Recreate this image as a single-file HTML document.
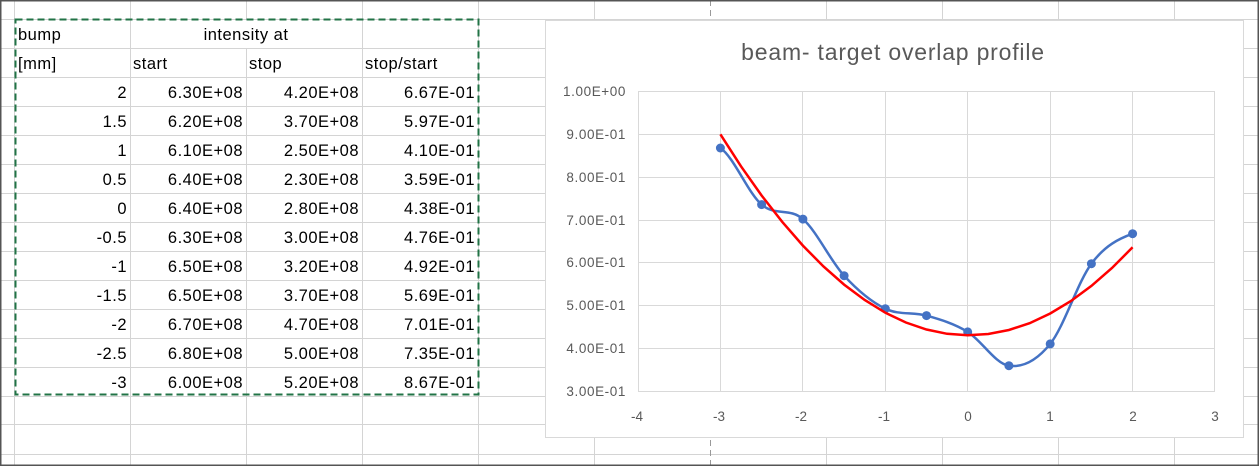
<!DOCTYPE html>
<html><head><meta charset="utf-8"><style>
html,body{margin:0;padding:0;background:#fff}
svg{display:block}
text{font-family:"Liberation Sans",sans-serif}
</style></head><body>
<svg width="1259" height="466" viewBox="0 0 1259 466" xmlns="http://www.w3.org/2000/svg">
<rect width="1259" height="466" fill="#fff"/>
<g stroke="#d4d4d4" stroke-width="1">
<line x1="14.5" y1="0" x2="14.5" y2="466"/>
<line x1="130.5" y1="0" x2="130.5" y2="466"/>
<line x1="246.5" y1="0" x2="246.5" y2="466"/>
<line x1="362.5" y1="0" x2="362.5" y2="466"/>
<line x1="478.5" y1="0" x2="478.5" y2="466"/>
<line x1="594.5" y1="0" x2="594.5" y2="466"/>
<line x1="826.5" y1="0" x2="826.5" y2="466"/>
<line x1="942.5" y1="0" x2="942.5" y2="466"/>
<line x1="1058.5" y1="0" x2="1058.5" y2="466"/>
<line x1="1174.5" y1="0" x2="1174.5" y2="466"/>
<line x1="0" y1="19.5" x2="1259" y2="19.5"/>
<line x1="0" y1="48.5" x2="1259" y2="48.5"/>
<line x1="0" y1="77.5" x2="1259" y2="77.5"/>
<line x1="0" y1="106.5" x2="1259" y2="106.5"/>
<line x1="0" y1="135.5" x2="1259" y2="135.5"/>
<line x1="0" y1="164.5" x2="1259" y2="164.5"/>
<line x1="0" y1="193.5" x2="1259" y2="193.5"/>
<line x1="0" y1="222.5" x2="1259" y2="222.5"/>
<line x1="0" y1="251.5" x2="1259" y2="251.5"/>
<line x1="0" y1="280.5" x2="1259" y2="280.5"/>
<line x1="0" y1="309.5" x2="1259" y2="309.5"/>
<line x1="0" y1="338.5" x2="1259" y2="338.5"/>
<line x1="0" y1="367.5" x2="1259" y2="367.5"/>
<line x1="0" y1="396.5" x2="1259" y2="396.5"/>
<line x1="0" y1="424.5" x2="1259" y2="424.5"/>
<line x1="0" y1="454.5" x2="1259" y2="454.5"/>
</g>
<rect x="131" y="20" width="231" height="28" fill="#fff"/>
<line x1="710.5" y1="0" x2="710.5" y2="466" stroke="#999" stroke-dasharray="6,4"/>
<rect x="15.5" y="19.5" width="463" height="375" fill="none" stroke="#217346" stroke-width="2" stroke-dasharray="7,4"/>
<g font-size="16.5" fill="#000" letter-spacing="0.5">
<text x="18" y="40">bump</text>
<text x="246" y="40" text-anchor="middle">intensity at</text>
<text x="18" y="69">[mm]</text>
<text x="133" y="69">start</text>
<text x="249" y="69">stop</text>
<text x="365" y="69">stop/start</text>
</g>
<g font-size="16.5" fill="#000" text-anchor="end" letter-spacing="0.5">
<text x="127" y="98">2</text><text x="243" y="98">6.30E+08</text><text x="359" y="98">4.20E+08</text><text x="475" y="98">6.67E-01</text>
<text x="127" y="127">1.5</text><text x="243" y="127">6.20E+08</text><text x="359" y="127">3.70E+08</text><text x="475" y="127">5.97E-01</text>
<text x="127" y="156">1</text><text x="243" y="156">6.10E+08</text><text x="359" y="156">2.50E+08</text><text x="475" y="156">4.10E-01</text>
<text x="127" y="185">0.5</text><text x="243" y="185">6.40E+08</text><text x="359" y="185">2.30E+08</text><text x="475" y="185">3.59E-01</text>
<text x="127" y="214">0</text><text x="243" y="214">6.40E+08</text><text x="359" y="214">2.80E+08</text><text x="475" y="214">4.38E-01</text>
<text x="127" y="243">-0.5</text><text x="243" y="243">6.30E+08</text><text x="359" y="243">3.00E+08</text><text x="475" y="243">4.76E-01</text>
<text x="127" y="272">-1</text><text x="243" y="272">6.50E+08</text><text x="359" y="272">3.20E+08</text><text x="475" y="272">4.92E-01</text>
<text x="127" y="301">-1.5</text><text x="243" y="301">6.50E+08</text><text x="359" y="301">3.70E+08</text><text x="475" y="301">5.69E-01</text>
<text x="127" y="330">-2</text><text x="243" y="330">6.70E+08</text><text x="359" y="330">4.70E+08</text><text x="475" y="330">7.01E-01</text>
<text x="127" y="359">-2.5</text><text x="243" y="359">6.80E+08</text><text x="359" y="359">5.00E+08</text><text x="475" y="359">7.35E-01</text>
<text x="127" y="388">-3</text><text x="243" y="388">6.00E+08</text><text x="359" y="388">5.20E+08</text><text x="475" y="388">8.67E-01</text>
</g>
<rect x="545.5" y="20.5" width="698" height="417" fill="#fff" stroke="#d9d9d9"/>
<text x="893" y="60" font-size="23" fill="#595959" text-anchor="middle" letter-spacing="0.8">beam- target overlap profile</text>
<g stroke="#d9d9d9" stroke-width="1">
<line x1="638" y1="91.5" x2="1215" y2="91.5"/>
<line x1="638" y1="134.5" x2="1215" y2="134.5"/>
<line x1="638" y1="177.5" x2="1215" y2="177.5"/>
<line x1="638" y1="220.5" x2="1215" y2="220.5"/>
<line x1="638" y1="262.5" x2="1215" y2="262.5"/>
<line x1="638" y1="305.5" x2="1215" y2="305.5"/>
<line x1="638" y1="348.5" x2="1215" y2="348.5"/>
<line x1="638" y1="391.5" x2="1215" y2="391.5"/>
<line x1="638.5" y1="91" x2="638.5" y2="391"/>
<line x1="720.5" y1="91" x2="720.5" y2="391"/>
<line x1="802.5" y1="91" x2="802.5" y2="391"/>
<line x1="885.5" y1="91" x2="885.5" y2="391"/>
<line x1="967.5" y1="91" x2="967.5" y2="391"/>
<line x1="1050.5" y1="91" x2="1050.5" y2="391"/>
<line x1="1132.5" y1="91" x2="1132.5" y2="391"/>
<line x1="1214.5" y1="91" x2="1214.5" y2="391"/>
</g>
<g font-size="13.5" fill="#595959" text-anchor="end" letter-spacing="0.6">
<text x="626" y="96">1.00E+00</text>
<text x="626" y="139">9.00E-01</text>
<text x="626" y="182">8.00E-01</text>
<text x="626" y="225">7.00E-01</text>
<text x="626" y="267">6.00E-01</text>
<text x="626" y="310">5.00E-01</text>
<text x="626" y="353">4.00E-01</text>
<text x="626" y="396">3.00E-01</text>
</g>
<g font-size="13.5" fill="#595959" text-anchor="middle">
<text x="637" y="421">-4</text><text x="719" y="421">-3</text><text x="801" y="421">-2</text><text x="884" y="421">-1</text>
<text x="968" y="421">0</text><text x="1050" y="421">1</text><text x="1133" y="421">2</text><text x="1215" y="421">3</text>
</g>
<path d="M720.4 148 C734.1 157.4 747.9 192.75 761.6 204.6 C775.3 216.45 789.2 207.25 802.9 219.1 C816.6 230.95 830.4 260.8 844.1 275.7 C857.8 290.6 871.6 302.05 885.3 308.7 C899 315.35 912.8 311.73 926.5 315.6 C940.2 319.47 954 323.55 967.7 331.9 C981.4 340.25 995.2 363.7 1008.9 365.7 C1022.6 367.7 1036.5 360.9 1050.2 343.9 C1063.9 326.9 1077.7 282.1 1091.4 263.7 C1105.1 245.3 1118.9 238.7 1132.6 233.7" fill="none" stroke="#4472c4" stroke-width="2.5"/>
<g fill="#4472c4">
<circle cx="720.4" cy="148" r="4.5"/><circle cx="761.6" cy="204.6" r="4.5"/><circle cx="802.9" cy="219.1" r="4.5"/><circle cx="844.1" cy="275.7" r="4.5"/><circle cx="885.3" cy="308.7" r="4.5"/><circle cx="926.5" cy="315.6" r="4.5"/><circle cx="967.7" cy="331.9" r="4.5"/><circle cx="1008.9" cy="365.7" r="4.5"/><circle cx="1050.2" cy="343.9" r="4.5"/><circle cx="1091.4" cy="263.7" r="4.5"/><circle cx="1132.6" cy="233.7" r="4.5"/>
</g>
<polyline fill="none" stroke="#ff0000" stroke-width="2.5" points="720.4,134.3 741,166.3 761.6,195.5 782.3,221.9 802.9,245.6 823.5,266.5 844.1,284.6 864.7,300 885.3,312.7 905.9,322.5 926.5,329.5 947.1,333.8 967.7,335.3 988.3,334 1008.9,330 1029.6,323.2 1050.2,313.5 1070.8,301.1 1091.4,285.9 1112,268 1132.6,247.3"/>
<rect x="0.5" y="0.5" width="1258" height="465" fill="none" stroke="#555" stroke-width="2"/>
</svg>
</body></html>
